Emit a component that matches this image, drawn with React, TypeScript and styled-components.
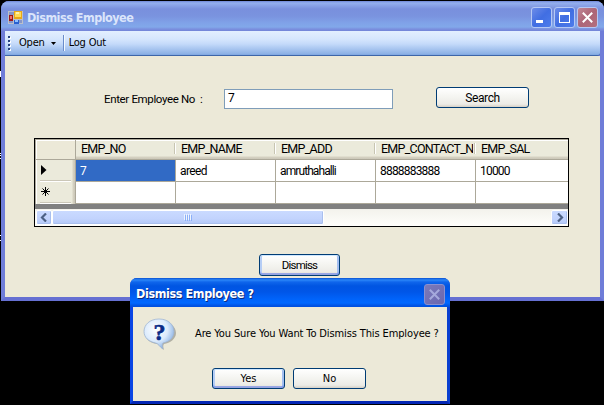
import React from 'react';
import styled, { createGlobalStyle } from 'styled-components';

const Global = createGlobalStyle`
  * { box-sizing: border-box; }
  html, body { margin: 0; padding: 0; background: #000; overflow: hidden; }
`;

const Screen = styled.div`
  position: relative;
  width: 604px;
  height: 405px;
  padding: 1px 0 0 1px;
  background: #000;
  overflow: hidden;
  color: #000;
`;

const Sliver = styled.i<{ $y: number; $h: number }>`
  position: absolute;
  left: 0;
  top: ${p => p.$y}px;
  width: 1px;
  height: ${p => p.$h}px;
  background: #fff;
`;

const Label = styled.span<{ $size?: number; $gap?: number; $ui?: boolean; $bold?: boolean }>`
  font-family: ${p => (p.$ui ? '"DejaVu Sans Condensed", "DejaVu Sans"' : 'Roboto')}, sans-serif;
  font-stretch: ${p => (p.$ui ? 'condensed' : 'normal')};
  font-size: ${p => p.$size ?? 12}px;
  font-weight: ${p => (p.$bold ? 700 : 400)};
  letter-spacing: ${p => p.$gap ?? 0}px;
  line-height: 16px;
  white-space: pre;
`;

const Window = styled.section`
  display: flex;
  flex-direction: column;
  width: 603px;
  height: 300px;
  border: solid #6f7dd8;
  border-width: 0 4px 4px;
  border-radius: 8px 8px 0 0;
  background: #6f7dd8;
  border-bottom-color: #6670d2;
`;

const TitleBar = styled.header`
  display: flex;
  align-items: center;
  height: 30px;
  flex: none;
  margin: 0 -4px;
  padding: 3px 6px 0 7px;
  border-radius: 8px 8px 0 0;
  background: linear-gradient(#6f86d6 0, #94b0ee 2px, #8ba5e8 4px, #7990dd 8px, #7a93df 15px, #80a2e8 22px, #82a8ea 26px, #7b90df 28px, #7384d8 30px);
  color: #dbe5fb;
`;

const TitleText = styled(Label)`
  margin: 1px auto 0 4px;
`;

const CaptionButton = styled.span<{ $close?: boolean }>`
  display: grid;
  place-items: center;
  width: 21px;
  height: 21px;
  margin-left: 2px;
  border: 1px solid #b5c8f4;
  border-radius: 3px;
  background: ${p => (p.$close
    ? 'linear-gradient(135deg, #c08795, #ad6577 50%, #b3707f)'
    : 'linear-gradient(135deg, #6d8ce8, #416ee2 50%, #4d7cec)')};
`;

const Toolbar = styled.nav`
  display: flex;
  align-items: center;
  height: 25px;
  flex: none;
  padding: 0 0 0 3px;
  background: linear-gradient(#e3efff 0, #d6e6fd 8px, #c4dafa 13px, #8bb0e5 23px, #7ba4e0 24px);
  border-bottom: 1px solid #3d65a8;
  border-radius: 0 0 3px 0;
`;

const Grip = styled.svg`
  margin-right: 7px;
`;

const DropArrow = styled.svg`
  margin-left: 6px;
`;

const Separator = styled.i`
  width: 2px;
  height: 16px;
  margin: 0 4px 0 7px;
  border-left: 1px solid #6a8ccb;
  border-right: 1px solid #f1f9ff;
`;

const Form = styled.main`
  display: flex;
  flex-direction: column;
  flex: 1;
  background: #ece9d8;
`;

const SearchRow = styled.div`
  display: flex;
  height: 22px;
  margin: 31px 0 0 99px;
`;

const FieldName = styled(Label)`
  width: 120px;
  padding-top: 4px;
`;

const Field = styled.div`
  display: flex;
  width: 169px;
  height: 20px;
  margin: 2px 43px 0 0;
  padding: 0 3px;
  border: 1px solid #7f9db9;
  background: #fff;
`;

const Button = styled.button<{ $w: number; $h?: number; $focus?: boolean }>`
  display: flex;
  align-items: center;
  justify-content: center;
  width: ${p => p.$w}px;
  height: ${p => p.$h ?? 21}px;
  padding: 0;
  border: 1px solid #003c74;
  border-radius: 3px;
  color: #000;
  background: linear-gradient(#fff, #f4f4f0 50%, #ecebe6 85%, #d6d0c5);
  box-shadow: ${p => (p.$focus ? 'inset 0 1px #cee7ff, inset 0 -2px #6982ee99, inset 2px 0 #b5cdf5, inset -2px 0 #a3bef0' : 'none')};
`;

const Grid = styled.div`
  display: flex;
  flex-direction: column;
  width: 535px;
  height: 89px;
  margin: 29px 0 0 29px;
  border: 1px solid #000;
  background: #808080;
`;

const Row = styled.div<{ $head?: boolean }>`
  display: grid;
  grid-template-columns: 41px 100px 100px 100px 100px 92px;
  height: ${p => (p.$head ? 21 : 22)}px;
  flex: none;
`;

const HeadCell = styled.div`
  display: flex;
  align-items: center;
  overflow: hidden;
  padding: 0 0 0 5px;
  border-bottom: 1px solid #aca899;
  background:
    linear-gradient(#c7c5b2, #c7c5b2) 98px 4px / 1px 11px no-repeat,
    linear-gradient(#fff, #fff) 99px 4px / 1px 11px no-repeat,
    linear-gradient(#aca899 1px, #fff 1px, #fff 2px, #ebeadb 2px, #ebeadb 17px, #d6d2c2 18px, #cbc7b8 20px);
`;

const Clip = styled.div`
  width: 92px;
  overflow: hidden;
  display: flex;
`;

const Corner = styled.div`
  border: 1px solid #aca899;
  background: #ece9d8;
  box-shadow: inset 1px 1px #fff;
`;

const RowHead = styled.div`
  display: flex;
  align-items: center;
  padding: 0 0 3px 5px;
  border: solid #aca899;
  border-width: 0 1px;
  background:
    linear-gradient(#cbc7b8, #cbc7b8) 4px 20px / 31px 1px no-repeat,
    linear-gradient(#fff, #fff) 4px 21px / 31px 1px no-repeat,
    linear-gradient(90deg, #fff 1px, #ebeadb 1px, #ebeadb 36px, #d6d2c2 37px, #cbc7b8);
`;

const Cell = styled.div<{ $on?: boolean }>`
  display: flex;
  align-items: center;
  padding: 1px 0 0 4px;
  border: solid #aca899;
  border-width: 0 1px 1px 0;
  background: ${p => (p.$on ? '#316ac5' : '#fff')};
  color: ${p => (p.$on ? '#fff' : '#000')};
  &:last-child { border-right: 0; }
`;

const ScrollBar = styled.div`
  display: flex;
  height: 17px;
  margin-top: auto;
  padding: 1px 0 1px 1px;
  background: linear-gradient(#f3f2ec, #fefefb);
`;

const ScrollPart = styled.div<{ $w: number }>`
  display: grid;
  place-items: center;
  width: ${p => p.$w}px;
  height: 15px;
  border: 1px solid #fff;
  border-radius: 2px;
  background: linear-gradient(#cadaff, #c2d3fd 60%, #b2c8f8);
  box-shadow: inset -1px -1px #a9bfee;
`;

const Spacer = styled.div`
  flex: 1;
`;

const DismissSlot = styled.div`
  margin: 27px 0 0 254px;
`;

const Dialog = styled.section`
  position: absolute;
  left: 130px;
  top: 278px;
  display: flex;
  flex-direction: column;
  width: 320px;
  height: 126px;
  border: solid;
  border-width: 0 3px 3px;
  border-color: #0831d9 #0a3fd0 #0427b5 #0a45e4;
  border-radius: 7px 7px 0 0;
  background: #0050e0;
`;

const DialogTitle = styled.header`
  display: flex;
  align-items: center;
  height: 29px;
  flex: none;
  margin: 0 -3px;
  padding: 3px 5px 0 6px;
  border-radius: 7px 7px 0 0;
  background: linear-gradient(#0a50d0 0, #2a86f8 2px, #0f66ec 4px, #0055e2 8px, #0056e8 14px, #0063fa 21px, #0068ff 25px, #0050e0 28px);
  color: #fff;
  text-shadow: 1px 1px #0f2a7a;
`;

const DisabledClose = styled.span`
  display: grid;
  place-items: center;
  width: 21px;
  height: 21px;
  margin-left: auto;
  border: 1px solid #8a90cf;
  border-radius: 3px;
  background: linear-gradient(135deg, #7a7ab9, #6a67b0);
`;

const DialogBody = styled.div`
  flex: 1;
  display: flex;
  flex-direction: column;
  background: #ece9d8;
`;

const Message = styled.div`
  display: flex;
  height: 33px;
  margin: 11px 0 0 10px;
  gap: 18px;
`;

const MessageText = styled(Label)`
  padding-top: 8px;
`;

const Actions = styled.div`
  display: flex;
  gap: 8px;
  margin: 17px 0 0 79px;
`;

const QuestionGlyph = styled.text`
  font: bold 24px "Liberation Serif", serif;
  fill: #0a2b86;
  stroke: #0a2b86;
  stroke-width: 0.6px;
`;

const columns = ['EMP_NO', 'EMP_NAME', 'EMP_ADD', 'EMP_CONTACT_N', 'EMP_SAL'];
const record = [
  { value: '7', gap: 0 },
  { value: 'areed', gap: -0.6 },
  { value: 'amruthahalli', gap: -0.9 },
  { value: '8888883888', gap: -0.8 },
  { value: '10000', gap: -0.8 },
];

const AppIcon = () => (
  <svg width="15" height="15" viewBox="0 0 15 15" shapeRendering="crispEdges">
    <path d="M0 1h15v13H0z" fill="#bcc0c8" />
    <path d="M1 2h5v3H1zM10 10h4v3h-4zM1 11h4v2H1z" fill="#8796c8" />
    <path d="M6 1h8v8H6z" fill="#e8a818" />
    <path d="M7 2h6v5H7z" fill="#ffdc58" />
    <path d="M8 2h3v2H8z" fill="#fff3a8" />
    <path d="M1 5h4v6H1z" fill="#a01818" />
    <path d="M2 6h2v3H2z" fill="#f07068" />
    <path d="M6 10h5v4H6z" fill="#2860d0" />
    <path d="M7 10h3v2H7z" fill="#90c0ff" />
  </svg>
);

const Question = () => (
  <svg width="34" height="34" viewBox="0 0 34 34">
    <defs>
      <radialGradient id="bubble" cx=".4" cy=".35" r=".7">
        <stop offset="0" stopColor="#fff" />
        <stop offset=".55" stopColor="#dcebfc" />
        <stop offset="1" stopColor="#7fa9e0" />
      </radialGradient>
    </defs>
    <path d="M17 3C8 3 2 8 2 15c0 6 5 10 12 11 2 0 4 4 7 6-1-3-1-5 0-6 6-1 12-5 12-11 0-7-7-12-16-12z" fill="#8b8b82" opacity=".6" />
    <path d="M16 1C7 1 1 6.500 1 13.500c0 6 4.500 10 11.500 11.500 3 .5 4 4 7.500 6-1-3-1-5 0-6 7-1.500 11-5.500 11-11.500C31 6.500 25 1 16 1z" fill="url(#bubble)" stroke="#9fb5d2" strokeWidth=".8" />
    <QuestionGlyph x="10.500" y="21.500">?</QuestionGlyph>
  </svg>
);

const Chevron = ({ right }: { right?: boolean }) => (
  <svg width="8" height="9" viewBox="0 0 8 9">
    <path d={right ? 'M2 .5l4 4-4 4' : 'M6 .5l-4 4 4 4'} fill="none" stroke="#4d6185" strokeWidth="2.200" />
  </svg>
);

const Cross = ({ color }: { color: string }) => (
  <svg width="11" height="11" viewBox="0 0 11 11">
    <path d="M.8.8l9.400 9.400M10.200.8L.8 10.200" stroke={color} strokeWidth="2" />
  </svg>
);

export default function App() {
  return (
    <Screen>
      <Global />
      <Sliver $y={71} $h={6} />
      <Sliver $y={153} $h={1} />
      <Sliver $y={155} $h={1} />
      <Sliver $y={158} $h={1} />
      <Sliver $y={235} $h={1} />
      <Sliver $y={240} $h={1} />
      <Window>
        <TitleBar>
          <AppIcon />
          <TitleText $ui $bold $size={12.5} $gap={-0.5}>Dismiss Employee</TitleText>
          <CaptionButton>
            <svg width="13" height="13" shapeRendering="crispEdges"><path d="M1 9h7v3H1z" fill="#fff" /></svg>
          </CaptionButton>
          <CaptionButton>
            <svg width="11" height="11" shapeRendering="crispEdges"><path d="M0 0h11v11H0zM1 3v7h9V3z" fillRule="evenodd" fill="#fff" /></svg>
          </CaptionButton>
          <CaptionButton $close><Cross color="#fff" /></CaptionButton>
        </TitleBar>
        <Toolbar>
          <Grip width="4" height="15" shapeRendering="crispEdges">
            {[0, 4, 8, 12].map(y => (
              <g key={y}>
                <path d={`M1 ${y + 1}h2v2h-2z`} fill="#fff" />
                <path d={`M0 ${y}h2v2h-2z`} fill="#27417f" />
              </g>
            ))}
          </Grip>
          <Label $ui $size={11} $gap={-0.2}>Open</Label>
          <DropArrow width="5" height="3"><path d="M0 0h5L2.500 3z" /></DropArrow>
          <Separator />
          <Label $ui $size={11} $gap={-0.2}>Log Out</Label>
        </Toolbar>
        <Form>
          <SearchRow>
            <FieldName $size={11.5} $gap={-0.35}>Enter Employee No  :</FieldName>
            <Field><Label>7</Label></Field>
            <Button $w={93}><Label $gap={-0.4}>Search</Label></Button>
          </SearchRow>
          <Grid>
            <Row $head>
              <Corner />
              {columns.map(c => (
                <HeadCell key={c}><Clip><Label $size={12.5} $gap={-0.75}>{c}</Label></Clip></HeadCell>
              ))}
            </Row>
            <Row>
              <RowHead><svg width="6" height="10"><path d="M0 0l5.500 5L0 10z" /></svg></RowHead>
              {record.map((r, i) => (
                <Cell key={r.value} $on={i === 0}><Label $gap={r.gap}>{r.value}</Label></Cell>
              ))}
            </Row>
            <Row>
              <RowHead>
                <svg width="9" height="9"><path d="M4.500 0v9M0 4.500h9M1.500 1.500l6 6M7.500 1.500l-6 6" stroke="#000" /></svg>
              </RowHead>
              {columns.map(c => <Cell key={c} />)}
            </Row>
            <ScrollBar>
              <ScrollPart $w={16}><Chevron /></ScrollPart>
              <ScrollPart $w={272}>
                <svg width="8" height="7" shapeRendering="crispEdges">
                  <path d="M.5 0v6M2.500 0v6M4.500 0v6M6.500 0v6" stroke="#eef4fe" />
                  <path d="M1.500 1v6M3.500 1v6M5.500 1v6M7.500 1v6" stroke="#8cb0f8" />
                </svg>
              </ScrollPart>
              <Spacer />
              <ScrollPart $w={17}><Chevron right /></ScrollPart>
            </ScrollBar>
          </Grid>
          <DismissSlot>
            <Button $w={81} $h={22} $focus><Label $size={11.5} $gap={-0.8}>Dismiss</Label></Button>
          </DismissSlot>
        </Form>
      </Window>
      <Dialog>
        <DialogTitle>
          <Label $ui $bold $size={12.5} $gap={-0.4}>Dismiss Employee ?</Label>
          <DisabledClose><Cross color="#a5a9dc" /></DisabledClose>
        </DialogTitle>
        <DialogBody>
          <Message>
            <Question />
            <MessageText $ui $size={11} $gap={-0.12}>Are You Sure You Want To Dismiss This Employee ?</MessageText>
          </Message>
          <Actions>
            <Button $w={73} $focus><Label $ui $size={11}>Yes</Label></Button>
            <Button $w={73}><Label $ui $size={11}>No</Label></Button>
          </Actions>
        </DialogBody>
      </Dialog>
    </Screen>
  );
}
